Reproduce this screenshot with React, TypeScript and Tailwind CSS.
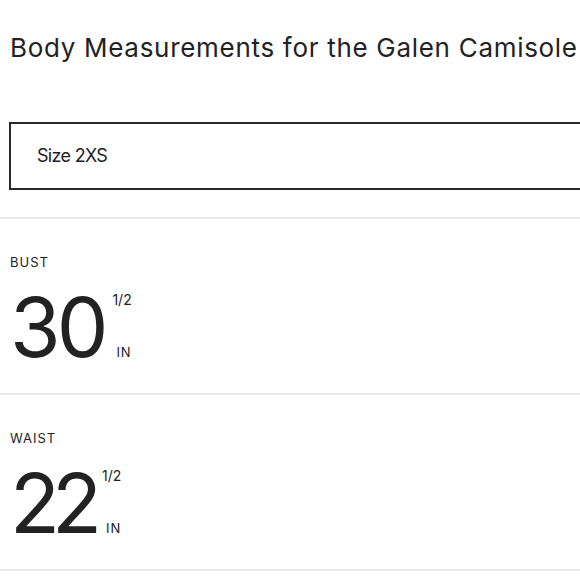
import React from 'react';

const measurements = [
    { label: 'BUST', whole: '30', fraction: '1/2', unit: 'IN', numberClass: 'tracking-[-4px]' },
    { label: 'WAIST', whole: '22', fraction: '1/2', unit: 'IN', numberClass: 'tracking-[-8px]' },
];

export default function App() {
    return (
        <div className="w-[580px] h-[580px] overflow-hidden bg-white text-[#222222]" style={{ fontFamily: 'Inter, "Noto Sans", sans-serif' }}>
            <h1 className="pt-[33px] pl-[10px] text-[26px] leading-[30px] tracking-[0.7px] font-normal whitespace-nowrap">
                Body Measurements for the Galen Camisole
            </h1>

            <div className="mt-[59px] ml-[9px] w-[700px] h-[68px] border-2 border-[#2a2a2a] flex items-center pl-[26px]">
                <span className="text-[18px] leading-[24px] tracking-[-0.7px]">Size 2XS</span>
            </div>

            <div className="mt-[27px]">
                {measurements.map((m) => (
                    <div key={m.label} className="border-t-2 border-b-2 border-[#e8e8e8] -mb-[2px] pl-[10px] pt-[35px] pb-[24px]">
                        <div className="text-[13px] leading-[16px] tracking-[1px]">{m.label}</div>
                        <div className="mt-[17px] flex items-stretch">
                            <span className={`text-[82px] leading-[82px] ${m.numberClass}`}>{m.whole}</span>
                            <div className="ml-[8px] flex flex-col items-end justify-between pt-[5px] pb-[9px]">
                                <span className="text-[14px] leading-[16px]">{m.fraction}</span>
                                <span className="text-[13px] leading-[16px] tracking-[1px]">{m.unit}</span>
                            </div>
                        </div>
                    </div>
                ))}
            </div>
        </div>
    );
}
